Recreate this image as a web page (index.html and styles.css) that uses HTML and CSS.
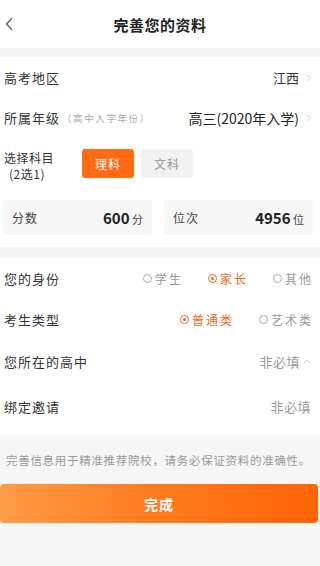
FILE: index.html
```html
<!DOCTYPE html>
<html lang="zh-CN">
<head>
<meta charset="utf-8">
<link rel="stylesheet" href="styles.css">
</head>
<body>
<div class="page">
  <header class="header">
    <svg class="back" width="10" height="14" viewBox="0 0 10 14"><path d="M8 1 L2.5 7 L8 13" fill="none" stroke="#666" stroke-width="1.4"/></svg>
    <h1 class="title">完善您的资料</h1>
  </header>
  <div class="strip s1"></div>
  <div class="row r1">
    <span class="label">高考地区</span>
    <span class="value">江西<svg class="chev" width="5" height="8" viewBox="0 0 5 8"><path d="M1 1 L4 4 L1 7" fill="none" stroke="#ccc" stroke-width="1"/></svg></span>
  </div>
  <div class="row r2">
    <span class="label">所属年级<small class="hint">（高中入学年份）</small></span>
    <span class="value dark">高三(2020年入学)<svg class="chev" width="5" height="8" viewBox="0 0 5 8"><path d="M1 1 L4 4 L1 7" fill="none" stroke="#ccc" stroke-width="1"/></svg></span>
  </div>
  <div class="subject">
    <div class="sublabel">选择科目<br><span class="subnote">(2选1)</span></div>
    <div class="btn on">理科</div>
    <div class="btn off">文科</div>
  </div>
  <div class="scores">
    <div class="score"><span class="slabel">分数</span><span class="sval"><b>600</b> 分</span></div>
    <div class="score"><span class="slabel">位次</span><span class="sval"><b>4956</b> 位</span></div>
  </div>
  <div class="strip s2"></div>
  <div class="row r3">
    <span class="label">您的身份</span>
    <div class="radios">
      <span class="radio"><i class="dot"></i>学生</span>
      <span class="radio sel"><i class="dot"></i>家长</span>
      <span class="radio"><i class="dot"></i>其他</span>
    </div>
  </div>
  <div class="row r4">
    <span class="label">考生类型</span>
    <div class="radios">
      <span class="radio sel"><i class="dot"></i>普通类</span>
      <span class="radio"><i class="dot"></i>艺术类</span>
    </div>
  </div>
  <div class="row r5">
    <span class="label">您所在的高中</span>
    <span class="value light">非必填<svg class="chev up" width="8" height="5" viewBox="0 0 8 5"><path d="M1 4 L4 1 L7 4" fill="none" stroke="#ccc" stroke-width="1"/></svg></span>
  </div>
  <div class="row r6">
    <span class="label">绑定邀请</span>
    <span class="value light">非必填</span>
  </div>
  <footer class="footer">
    <p class="note">完善信息用于精准推荐院校，请务必保证资料的准确性。</p>
    <div class="done">完成</div>
  </footer>
</div>
</body>
</html>
```
FILE: styles.css
```css
* { box-sizing: border-box; margin: 0; padding: 0; }
html, body { width: 320px; height: 566px; overflow: hidden; }
body { font-family: "Noto Sans CJK SC", "Noto Sans", sans-serif; background: #fff; color: #333; }
.page { display: flex; flex-direction: column; height: 566px; }
.header { height: 48px; display: flex; align-items: center; justify-content: center; position: relative; }
.back { position: absolute; left: 4px; top: 17px; }
.title { font-size: 15px; font-weight: 700; color: #222; letter-spacing: 0.5px; }
.strip { background: #f5f5f5; flex: none; }
.s1 { height: 9px; }
.s2 { height: 11px; }
.row { display: flex; align-items: center; justify-content: space-between; padding: 0 9px 0 4px; flex: none; }
.r1 { height: 41px; }
.r2 { height: 39px; }
.r3 { height: 41px; }
.r4 { height: 40px; }
.r5 { height: 45px; }
.r6 { height: 45px; }
.label { font-size: 13px; letter-spacing: 1px; color: #333; display: flex; align-items: center; }
.hint { font-size: 9.5px; color: #aaa; letter-spacing: 1.6px; margin-left: 2px; }
.value { font-size: 13px; color: #333; display: flex; align-items: center; }
.value.dark { font-size: 14px; color: #222; }
.value.light { color: #999; letter-spacing: 0.5px; }
.chev { margin-left: 7px; flex: none; }
.chev.up { margin-left: 3px; }
.subject { display: flex; align-items: flex-start; padding: 12px 0 0 4px; height: 63px; flex: none; }
.sublabel { font-size: 12px; line-height: 16px; color: #333; width: 78px; padding-top: 1px; letter-spacing: 0.5px; }
.subnote { padding-left: 5px; }
.btn { width: 52px; height: 29px; border-radius: 3px; display: flex; align-items: center; justify-content: center; font-size: 12px; letter-spacing: 1px; }
.btn.on { background: #ff6a12; color: #fff; }
.btn.off { background: #f2f2f2; color: #999; margin-left: 7px; }
.scores { display: flex; gap: 12px; padding: 0 7px 0 3px; height: 47px; flex: none; align-items: flex-start; }
.score { flex: 1; height: 35px; background: #f7f7f7; border-radius: 3px; display: flex; align-items: center; justify-content: space-between; padding: 0 9px; }
.slabel { font-size: 12px; color: #444; letter-spacing: 1px; }
.sval { font-size: 11px; color: #444; }
.sval b { font-size: 15px; font-weight: 700; color: #222; }
.radios { display: flex; gap: 27px; }
.radio { display: flex; align-items: center; font-size: 12px; color: #999; letter-spacing: 2px; margin-right: -2px; }
.dot { width: 9px; height: 9px; border: 1px solid #aaa; border-radius: 50%; margin-right: 3px; position: relative; }
.radio.sel { color: #ee6a1c; }
.radio.sel .dot { border-color: #ee6a1c; }
.radio.sel .dot::after { content: ""; position: absolute; left: 2px; top: 2px; width: 3px; height: 3px; border-radius: 50%; background: #ee6a1c; }
.footer { flex: 1; margin-top: 6px; background: #f6f6f6; padding-top: 18px; }
.note { font-size: 11.5px; line-height: 14px; color: #999; padding-left: 6px; letter-spacing: 0.7px; white-space: nowrap; }
.done { margin-top: 17px; width: 318px; height: 39px; border-radius: 4px; background: linear-gradient(90deg, #ff9b45 0%, #ff7a1e 50%, #ff6405 100%); color: #fff; font-size: 14px; font-weight: 700; display: flex; align-items: center; justify-content: center; letter-spacing: 1px; }
```
